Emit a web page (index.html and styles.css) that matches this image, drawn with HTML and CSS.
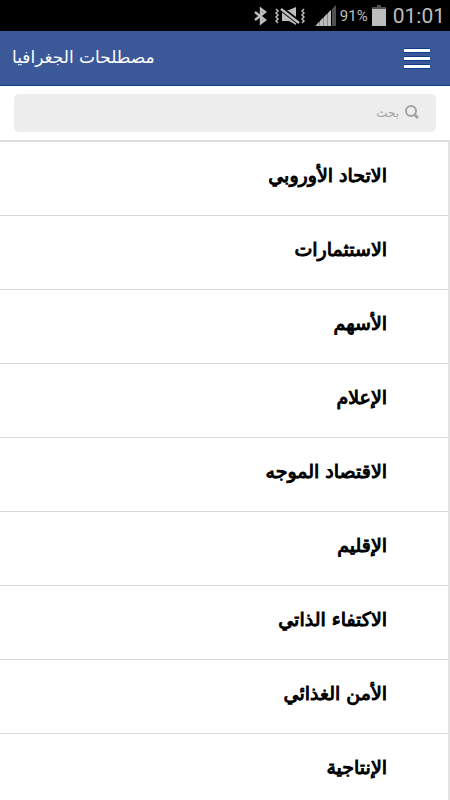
FILE: index.html
```html
<!DOCTYPE html>
<html lang="ar" dir="rtl">
<head>
    <meta charset="UTF-8">
    <meta name="viewport" content="width=device-width, initial-scale=1.0">
    <title>مصطلحات الجغرافيا</title>
    <link rel="stylesheet" href="styles.css">
</head>
<body>

    <div class="status-bar" dir="ltr">
        <svg class="bluetooth" width="13" height="20" viewBox="0 0 13 20" fill="none" stroke="#bdbdbd" stroke-width="2.400">
            <path d="M1 6L11 14L7 17V3L11 6L1 14"/>
        </svg>
        <svg class="mute" width="30" height="20" viewBox="0 0 30 20">
            <path d="M7 4h7l7-3v18l-7-4H7z" fill="#bdbdbd"/>
            <path d="M4 1l22 17" stroke="#000" stroke-width="5"/>
            <path d="M6 3l18 14" stroke="#bdbdbd" stroke-width="2.400"/>
            <path d="M1 3l2 2-2 2 2 2-2 2 2 2-2 2 2 2M29 3l-2 2 2 2-2 2 2 2-2 2 2 2-2 2" fill="none" stroke="#bdbdbd" stroke-width="1.500"/>
        </svg>
        <svg class="signal" width="21" height="21" viewBox="0 0 21 21">
            <path d="M0 21L16 5V21z" fill="#8a8a8a"/>
            <path d="M1 21L4 17V21zM5 16L8 13V21H5zM9 12L12 9V21H9zM13 8L16 5V21H13z" fill="#bdbdbd"/>
            <path d="M17 4L21 0V21H17z" fill="#505050"/>
        </svg>
        <span class="percent">91%</span>
        <svg class="battery" width="14" height="21" viewBox="0 0 14 21">
            <path d="M5 0h4v2h5v3H0V2h5z" fill="#505050"/>
            <path d="M0 4h14v17H0z" fill="#bdbdbd"/>
        </svg>
        <span class="clock">01:01</span>
    </div>

    <header class="header">
        <button class="menu" type="button" aria-label="القائمة">
            <span></span><span></span><span></span>
        </button>
        <h1>مصطلحات الجغرافيا</h1>
    </header>

    <form class="search">
        <label class="search-box" for="search">
            <svg width="14" height="16" viewBox="0 0 14 16" fill="none" stroke="#a3a3a3" stroke-width="2">
                <circle cx="6" cy="6" r="5"/>
                <path d="M9 9l4 4" stroke-width="3"/>
            </svg>
            <input id="search" type="search" placeholder="بحث" aria-label="بحث">
        </label>
    </form>

    <ul class="terms">
        <li><a href="#">الاتحاد الأوروبي</a></li>
        <li><a href="#">الاستثمارات</a></li>
        <li><a href="#">الأسهم</a></li>
        <li><a href="#">الإعلام</a></li>
        <li><a href="#">الاقتصاد الموجه</a></li>
        <li><a href="#">الإقليم</a></li>
        <li><a href="#">الاكتفاء الذاتي</a></li>
        <li><a href="#">الأمن الغذائي</a></li>
        <li><a href="#">الإنتاجية</a></li>
    </ul>

</body>
</html>
```
FILE: styles.css
```css
* {
    margin: 0;
    padding: 0;
    box-sizing: border-box;
    font-family: "DejaVu Sans", sans-serif;
}

body {
    height: 100vh;
    overflow: hidden;
    background: #ffffff;
}

.status-bar {
    display: flex;
    justify-content: flex-end;
    align-items: center;
    height: 31px;
    padding: 0 5px;
    background: #000000;
    color: #bdbdbd;
}

.mute {
    margin: 0 10px 0 8px;
}

.percent {
    margin: 0 4px;
    font-family: Roboto, sans-serif;
    font-size: 15px;
}

.clock {
    margin-left: 7px;
    font-family: Roboto, sans-serif;
    font-size: 21px;
}

.header {
    display: flex;
    justify-content: space-between;
    align-items: center;
    height: 55px;
    padding: 0 20px 0 12px;
    background: #3b5998;
    border-bottom: 1px solid #0b3d8c;
}

.header h1 {
    color: #ffffff;
    font-size: 17px;
    font-weight: normal;
    line-height: 20px;
    padding-bottom: 2px;
}

.menu {
    display: flex;
    flex-direction: column;
    gap: 3px;
    width: 26px;
    border: none;
    background: none;
    cursor: pointer;
}

.menu span {
    height: 5px;
    background: #ffffff;
    border: 1px solid #0b3d8c;
    border-width: 1px 0;
}

.search {
    padding: 8px 14px;
}

.search-box {
    display: flex;
    align-items: center;
    gap: 6px;
    height: 38px;
    padding: 0 17px;
    background: #ededed;
    border-radius: 5px;
}

.search-box input {
    flex: 1;
    min-width: 0;
    border: none;
    outline: none;
    background: none;
    font-size: 12px;
}

.search-box input::placeholder {
    color: #a3a3a3;
}

.terms {
    list-style: none;
    border-top: 2px solid #dddddd;
    border-right: 2px solid #e3e3e3;
}

.terms a {
    display: block;
    height: 74px;
    padding: 0 61px;
    border-bottom: 1px solid #d8d8d8;
    color: #000000;
    font-size: 19px;
    line-height: 66px;
    text-decoration: none;
    -webkit-text-stroke: 1px #000000;
}
```
